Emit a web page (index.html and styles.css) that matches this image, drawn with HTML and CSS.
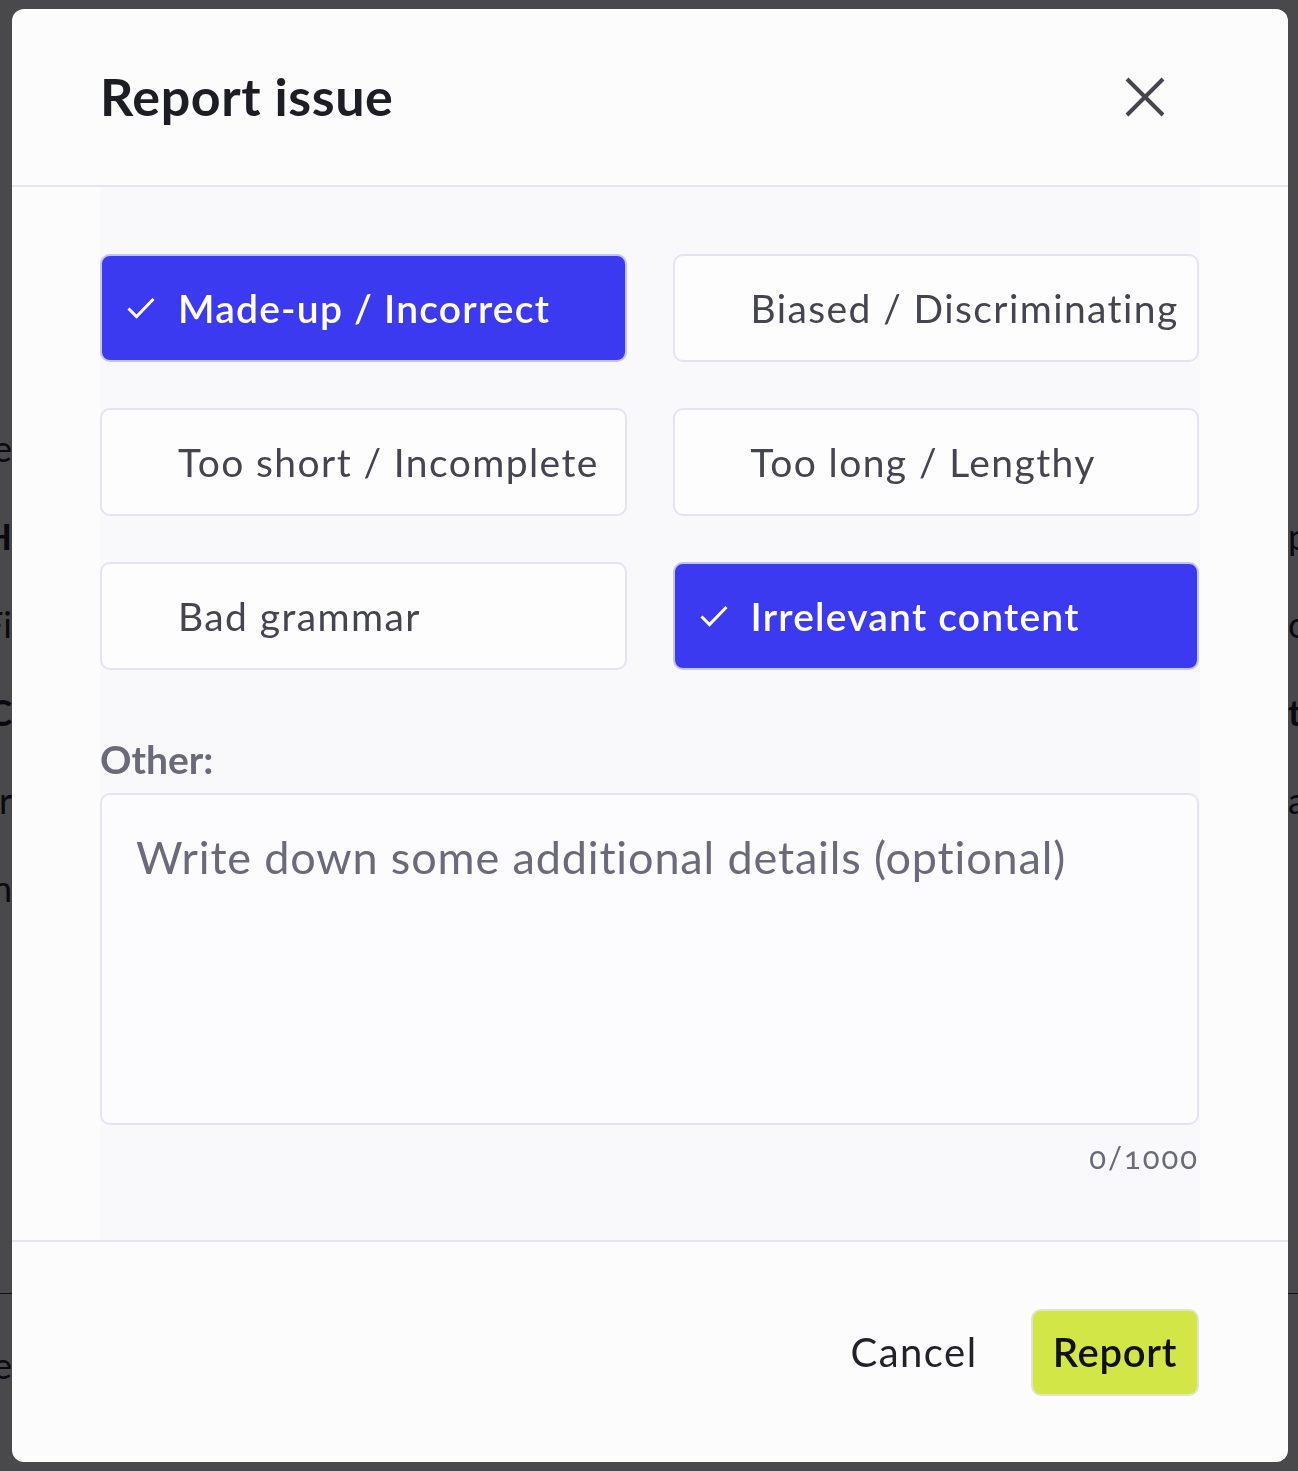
FILE: index.html
```html
<!DOCTYPE html>
<html lang="en">
<head>
  <meta charset="UTF-8">
  <meta name="viewport" content="width=device-width, initial-scale=1.0">
  <title>Report issue</title>
  <link rel="stylesheet" href="styles.css">
</head>
<body>
  <!-- page behind the dialog, mostly covered -->
  <div class="page">
    <div class="page-row"><span class="left">Some example line</span><span class="right"></span></div>
    <div class="page-row"><span class="left bold">Heading H</span><span class="right">press</span></div>
    <div class="page-row"><span class="left">Fi</span><span class="right">code</span></div>
    <div class="page-row"><span class="left bold">Topic C</span><span class="right bold">the</span></div>
    <div class="page-row"><span class="left">for</span><span class="right">and</span></div>
    <div class="page-row"><span class="left">in</span><span class="right"></span></div>
    <div class="page-rule"></div>
    <div class="page-row"><span class="left">the</span><span class="right"></span></div>
  </div>

  <div class="backdrop">
    <div class="modal">
      <div class="modal-header">
        <h2>Report issue</h2>
        <button class="close" aria-label="Close">
          <svg width="40" height="40" viewBox="0 0 40 40"><path d="M2 2 L38 38 M38 2 L2 38" stroke="#45454f" stroke-width="4" fill="none"/></svg>
        </button>
      </div>

      <div class="modal-body">
        <div class="options">
          <button class="option selected"><span class="check"><svg width="28" height="22" viewBox="0 0 28 22"><path d="M1.5 11.5 L9.5 19.5 L26.5 2" stroke="#fff" stroke-width="3" fill="none"/></svg></span>Made-up / Incorrect</button>
          <button class="option"><span class="check"></span>Biased / Discriminating</button>
          <button class="option"><span class="check"></span>Too short / Incomplete</button>
          <button class="option"><span class="check"></span>Too long / Lengthy</button>
          <button class="option"><span class="check"></span>Bad grammar</button>
          <button class="option selected"><span class="check"><svg width="28" height="22" viewBox="0 0 28 22"><path d="M1.5 11.5 L9.5 19.5 L26.5 2" stroke="#fff" stroke-width="3" fill="none"/></svg></span>Irrelevant content</button>
        </div>

        <label class="other-label" for="other">Other:</label>
        <textarea id="other" placeholder="Write down some additional details (optional)"></textarea>
        <div class="counter">0/1000</div>
      </div>

      <div class="modal-footer">
        <div class="footer-inner">
          <button class="cancel">Cancel</button>
          <button class="report">Report</button>
        </div>
      </div>
    </div>
  </div>
</body>
</html>
```

FILE: styles.css
```css
/* Base */
body {
  margin: 0;
  padding: 0;
  background-color: #ffffff;
  color: #1f1f2b;
  font-family: Lato, "Open Sans", sans-serif;
  overflow: hidden;
}

button {
  font-family: inherit;
  cursor: pointer;
}

/* Page under the dialog */
.page {
  padding-top: 418px;
}

.page-row {
  display: flex;
  justify-content: space-between;
  height: 88px;
  font-size: 36px;
  line-height: 60px;
  color: #1c1c28;
}

.page-row .left {
  display: flex;
  justify-content: flex-end;
  width: 12px;
  white-space: nowrap;
}

.page-row .right {
  width: 10px;
  white-space: nowrap;
}

.page-row .bold {
  font-weight: bold;
}

.page-rule {
  height: 1px;
  background-color: #2c2c4a;
  margin-top: 347px;
  margin-bottom: 41px;
}

/* Backdrop + dialog */
.backdrop {
  position: fixed;
  top: 0;
  left: 0;
  right: 0;
  bottom: 0;
  background-color: rgba(3, 3, 6, 0.72);
  padding: 9px 10px 9px 12px;
}

.modal {
  height: 1453px;
  background-color: #fcfcfd;
  border-radius: 12px;
  display: flex;
  flex-direction: column;
  overflow: hidden;
}

/* Header */
.modal-header {
  height: 176px;
  display: flex;
  align-items: center;
  justify-content: space-between;
  padding: 0 124px 0 88px;
  border-bottom: 2px solid #e5e5ef;
  flex-shrink: 0;
}

.modal-header h2 {
  margin: 0 0 3px;
  font-size: 52px;
  font-weight: bold;
  color: #1d1d24;
  letter-spacing: 0.6px;
}

.close {
  background: transparent;
  border: none;
  padding: 0;
  width: 40px;
  height: 40px;
  margin-right: -1px;
}

.close svg {
  display: block;
}

/* Body */
.modal-body {
  width: 1100px;
  margin: 0 auto;
  background-color: #f9f9fc;
  padding: 67px 0 0;
  box-sizing: border-box;
  flex-grow: 1;
}

.options {
  display: grid;
  grid-template-columns: 1fr 1fr;
  column-gap: 46px;
  row-gap: 46px;
  padding: 0 1px 0 0;
}

.option {
  display: flex;
  align-items: center;
  height: 108px;
  padding: 0 0 0 25px;
  background-color: #fdfdfe;
  border: 2px solid #e4e4f1;
  border-radius: 10px;
  font-size: 39px;
  letter-spacing: 1.4px;
  color: #45454f;
  text-align: left;
  white-space: nowrap;
}

.option.selected {
  background-color: #3c3af1;
  border-color: #c3c3f6;
  color: #ffffff;
  font-weight: 600;
  letter-spacing: 1.2px;
}

.check {
  display: inline-block;
  width: 28px;
  height: 22px;
  margin-right: 23px;
  flex-shrink: 0;
}

.check svg {
  display: block;
}

.other-label {
  display: block;
  margin: 67px 0 0 0;
  font-size: 39px;
  line-height: 44px;
  font-weight: bold;
  color: #6a6a78;
}

textarea {
  display: block;
  box-sizing: border-box;
  width: 1099px;
  height: 332px;
  margin: 12px 0 0 0;
  padding: 34px 34px;
  background-color: #fcfcfe;
  border: 2px solid #e4e4f1;
  border-radius: 10px;
  font-family: inherit;
  font-size: 45px;
  letter-spacing: 0.85px;
  line-height: 56px;
  color: #1f1f2b;
  resize: none;
  outline: none;
}

textarea::placeholder {
  color: #6a6a78;
}

.counter {
  text-align: right;
  margin-top: 12px;
  padding-right: 1px;
  font-size: 31px;
  line-height: 40px;
  color: #6a6a78;
  letter-spacing: 2px;
  font-variant-numeric: oldstyle-nums;
}

/* Footer */
.modal-footer {
  height: 220px;
  border-top: 2px solid #e5e5ef;
  display: flex;
  align-items: center;
  flex-shrink: 0;
}

.footer-inner {
  width: 1100px;
  margin: 0 auto;
  display: flex;
  justify-content: flex-end;
  align-items: center;
  gap: 27px;
}

.cancel {
  background: transparent;
  border: none;
  padding: 0 26px;
  font-size: 40px;
  letter-spacing: 1.5px;
  color: #22222a;
}

.report {
  height: 87px;
  margin-right: 1px;
  padding: 0 20px;
  background-color: #d3e647;
  border: 2px solid #e1e4cc;
  border-radius: 10px;
  font-size: 40px;
  letter-spacing: 0.7px;
  font-weight: 600;
  color: #111114;
}
```
